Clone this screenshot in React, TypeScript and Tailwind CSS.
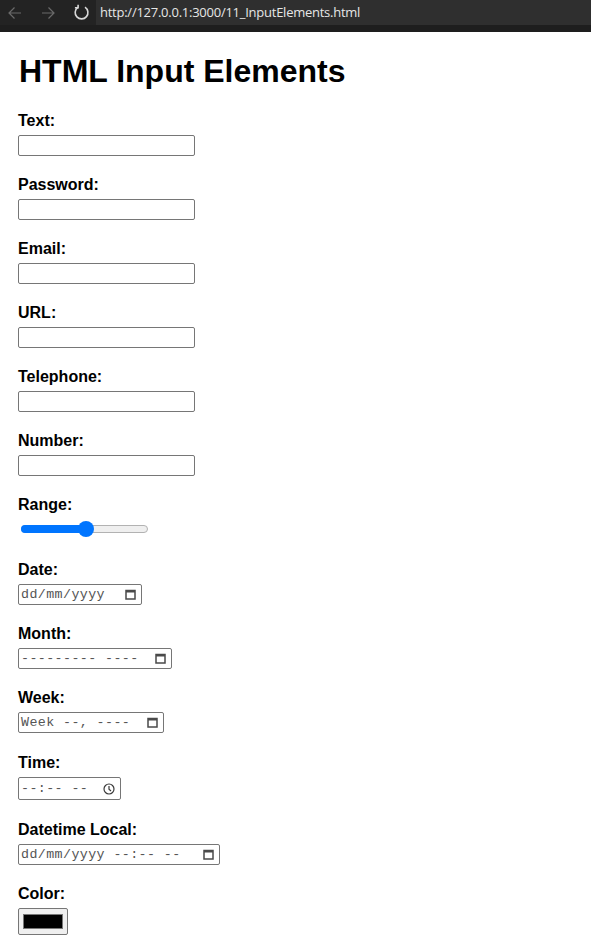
import React from "react";

const CalendarIcon = () => (
  <svg width="11" height="11" viewBox="0 0 11 11" className="shrink-0">
    <rect x="1" y="1.5" width="9" height="8.5" fill="none" stroke="#4a4a4a" strokeWidth="1.5" />
    <rect x="1" y="1" width="9" height="2.5" fill="#4a4a4a" />
  </svg>
);

const ClockIcon = () => (
  <svg width="12" height="12" viewBox="0 0 12 12" className="shrink-0">
    <circle cx="6" cy="6" r="5" fill="none" stroke="#3a3a3a" strokeWidth="1.2" />
    <path d="M6 3 V6.3 L8 8" fill="none" stroke="#3a3a3a" strokeWidth="1.2" />
  </svg>
);

const Label = ({ children, className = "" }: { children: React.ReactNode; className?: string }) => (
  <div className={`text-[16px] leading-[19px] font-bold text-black ${className}`}>{children}</div>
);

const TextBox = () => (
  <div className="mt-[5px] w-[177px] h-[21px] border border-[#767676] rounded-[2px] bg-white" />
);

const DateBox = ({
  text,
  width,
  icon = "cal",
  height = 21,
}: {
  text: string;
  width: string;
  icon?: "cal" | "clock";
  height?: number;
}) => (
  <div
    className={`mt-[5px] ${width} ${height === 23 ? "h-[23px]" : "h-[21px]"} border border-[#767676] rounded-[2px] bg-white flex items-center justify-between pl-[2px] pr-[5px]`}
  >
    <span className="font-['Liberation_Mono',monospace] text-[13.33px] leading-none text-[#555555] whitespace-pre tracking-[0.4px]">
      {text}
    </span>
    {icon === "cal" ? <CalendarIcon /> : <ClockIcon />}
  </div>
);

export default function App() {
  return (
    <div className="min-h-[939px] bg-white font-['Liberation_Sans',Arial,sans-serif]">
      {/* Browser toolbar */}
      <div className="h-[25px] bg-[#232323] flex items-stretch">
        <div className="w-[96px] flex items-center pl-[7px] gap-[17px]">
          <svg width="16" height="14" viewBox="0 0 16 14">
            <path d="M14 7 H2 M7.5 1.5 L2 7 L7.5 12.5" fill="none" stroke="#6a6a6a" strokeWidth="1.2" />
          </svg>
          <svg width="16" height="14" viewBox="0 0 16 14">
            <path d="M2 7 H14 M8.5 1.5 L14 7 L8.5 12.5" fill="none" stroke="#6a6a6a" strokeWidth="1.2" />
          </svg>
          <svg width="17" height="17" viewBox="0 0 16 16">
            <path d="M11.3 3 A6 6 0 1 1 4.5 3.2" fill="none" stroke="#d8d8d8" strokeWidth="1.5" />
            <path d="M4.8 0.8 V3.6 H1.8" fill="none" stroke="#d8d8d8" strokeWidth="1.5" />
          </svg>
        </div>
        <div className="flex-1 bg-[#2f2f2f] flex items-center pl-[4px]">
          <span className="text-[13px] leading-none text-[#e6e6e6] font-['Open_Sans',sans-serif] tracking-[-0.25px]">
            http://127.0.0.1:3000/11_InputElements.html
          </span>
        </div>
      </div>
      <div className="h-[7px] bg-[#1e1e1e]" />

      {/* Page */}
      <div className="pl-[18px]">
        <h1 className="mt-[21px] text-[32px] leading-[37px] font-bold text-black pl-[1px]">HTML Input Elements</h1>

        <Label className="mt-[21px]">Text:</Label>
        <TextBox />

        <Label className="mt-[19px]">Password:</Label>
        <TextBox />

        <Label className="mt-[19px]">Email:</Label>
        <TextBox />

        <Label className="mt-[19px]">URL:</Label>
        <TextBox />

        <Label className="mt-[19px]">Telephone:</Label>
        <TextBox />

        <Label className="mt-[19px]">Number:</Label>
        <TextBox />

        <Label className="mt-[19px]">Range:</Label>
        <div className="mt-[5px] h-[20px] w-[131px] pl-[3px] flex items-center relative">
          <div className="w-[127px] h-[8px] rounded-full bg-[#efefef] border border-[#b2b2b2] relative">
            <div className="absolute left-[-1px] top-[-1px] h-[8px] w-[66px] rounded-full bg-[#0075ff]" />
            <div className="absolute left-[56px] top-[-5px] h-[16px] w-[16px] rounded-full bg-[#0075ff]" />
          </div>
        </div>

        <Label className="mt-[21px]">Date:</Label>
        <DateBox text="dd/mm/yyyy" width="w-[124px]" />

        <Label className="mt-[19px]">Month:</Label>
        <DateBox text="--------- ----" width="w-[154px]" />

        <Label className="mt-[19px]">Week:</Label>
        <DateBox text="Week --, ----" width="w-[146px]" />

        <Label className="mt-[20px]">Time:</Label>
        <DateBox text="--:-- --" width="w-[103px]" icon="clock" height={23} />

        <Label className="mt-[20px]">Datetime Local:</Label>
        <DateBox text="dd/mm/yyyy --:-- --" width="w-[202px]" />

        <Label className="mt-[19px]">Color:</Label>
        <div className="mt-[5px] w-[50px] h-[27px] border border-[#767676] rounded-[2px] bg-[#efefef] flex items-center justify-center">
          <div className="w-[40px] h-[15px] bg-black border border-[#777777]" />
        </div>
      </div>
    </div>
  );
}
